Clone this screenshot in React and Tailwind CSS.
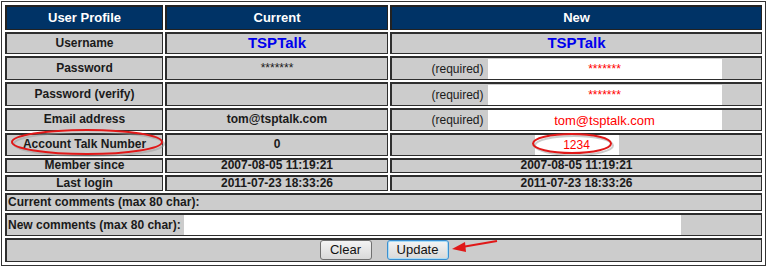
export default function App() {
  const base =
    "border-t-2 border-l-2 border-r border-b border-[#2e2e2e] bg-[#cccccc] flex items-center text-[12px] leading-none text-[#1a1a1a] pb-[2px]";
  const c = base + " justify-center font-bold";
  const hd =
    "border-t-2 border-l-2 border-r border-b border-[#222] bg-[#003366] flex items-center justify-center text-[13px] font-bold text-white leading-none pb-px";
  const inp =
    "bg-white text-[#ff0000] text-center outline-none border-0 p-0 font-['Liberation_Sans',Arial,sans-serif]";

  return (
    <div className="relative w-[767px] h-[267px] bg-white font-['Liberation_Sans',Arial,sans-serif]">
      <div className="ml-px mt-px w-[765px] h-[265px] border border-[#333] p-[3px]">
        <div className="grid grid-cols-[158px_223px_372px] grid-rows-[25px_22px_24px_24px_23px_23px_15px_16px_18px_23px_24px] gap-[2px]">
          <div className={hd}>User Profile</div>
          <div className={hd}>Current</div>
          <div className={hd}>New</div>

          <div className={c}>Username</div>
          <div className={c + " !text-[15px] !text-[#0000ee]"}>TSPTalk</div>
          <div className={c + " !text-[15px] !text-[#0000ee]"}>TSPTalk</div>

          <div className={c}>Password</div>
          <div className={c + " !font-normal"}>*******</div>
          <div className={base + " justify-center gap-[4px] !pb-0"}>
            <span>(required)</span>
            <input readOnly value="*******" className={inp + " w-[234px] h-[20px] text-[12px]"} />
          </div>

          <div className={c}>Password (verify)</div>
          <div className={c}></div>
          <div className={base + " justify-center gap-[4px] !pb-0"}>
            <span>(required)</span>
            <input readOnly value="*******" className={inp + " w-[234px] h-[20px] text-[12px]"} />
          </div>

          <div className={c}>Email address</div>
          <div className={c}>tom@tsptalk.com</div>
          <div className={base + " justify-center gap-[4px] !pb-0"}>
            <span>(required)</span>
            <input readOnly value="tom@tsptalk.com" className={inp + " w-[234px] h-[20px] text-[13px]"} />
          </div>

          <div className={c}>Account Talk Number</div>
          <div className={c}>0</div>
          <div className={base + " justify-center !pb-0"}>
            <input readOnly value="1234" className={inp + " w-[84px] h-[20px] text-[12px]"} />
          </div>

          <div className={c}>Member since</div>
          <div className={c}>2007-08-05 11:19:21</div>
          <div className={c}>2007-08-05 11:19:21</div>

          <div className={c}>Last login</div>
          <div className={c}>2011-07-23 18:33:26</div>
          <div className={c}>2011-07-23 18:33:26</div>

          <div className={base + " col-span-3 font-bold pl-px"}>Current comments (max 80 char):</div>

          <div className={base + " col-span-3 font-bold pl-px gap-[3px] !pb-0"}>
            <span className="pb-px">New comments (max 80 char):</span>
            <input readOnly value="" className={inp + " w-[497px] h-[20px] text-[12px]"} />
          </div>

          <div className={base + " col-span-3 justify-center gap-[15px]"}>
            <button className="w-[52px] h-[20px] rounded-[3px] border border-[#707070] bg-gradient-to-b from-[#f4f4f4] to-[#d9d9d9] text-[13px] text-[#111] leading-none">
              Clear
            </button>
            <button className="w-[62px] h-[20px] rounded-[3px] border border-[#3c8fd0] shadow-[inset_0_0_0_1px_#a9dcf6] bg-gradient-to-b from-[#f4f4f4] to-[#d9d9d9] text-[13px] text-[#111] leading-none">
              Update
            </button>
          </div>
        </div>
      </div>

      <svg
        className="absolute left-0 top-0 pointer-events-none"
        width="767"
        height="267"
        viewBox="0 0 767 267"
      >
        <ellipse cx="89" cy="143" rx="75" ry="12" fill="none" stroke="#999" strokeOpacity="0.5" strokeWidth="2" />
        <ellipse cx="87" cy="141" rx="75" ry="12" fill="none" stroke="#e01818" strokeWidth="2" />
        <ellipse cx="574" cy="144.5" rx="39" ry="9.5" fill="none" stroke="#999" strokeOpacity="0.5" strokeWidth="2" />
        <ellipse cx="572" cy="142.5" rx="39" ry="9.5" fill="none" stroke="#e01818" strokeWidth="2" />
        <line x1="497" y1="240" x2="462" y2="246" stroke="#e01818" strokeWidth="2" />
        <polygon points="452,248 465,241 466,251" fill="#e01818" />
      </svg>
    </div>
  );
}
